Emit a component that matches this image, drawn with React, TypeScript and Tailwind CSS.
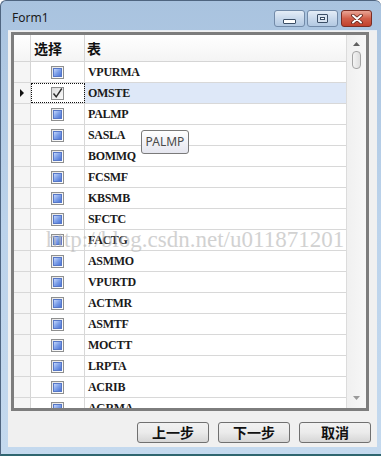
import React from "react";

const rows = [
  "VPURMA", "OMSTE", "PALMP", "SASLA", "BOMMQ", "FCSMF", "KBSMB", "SFCTC", "FACTG",
  "ASMMO", "VPURTD", "ACTMR", "ASMTF", "MOCTT", "LRPTA", "ACRIB", "AGRMA",
];

function BlueBox() {
  return (
    <div className="w-[13px] h-[13px] border border-[#8e8f8f] bg-gradient-to-br from-[#e6e6e6] to-[#ffffff] flex items-center justify-center">
      <div className="w-[9px] h-[9px] border border-[#5677c7] bg-gradient-to-br from-[#c3d5fb] via-[#7d9fe8] to-[#4c74d6]" />
    </div>
  );
}

function CheckedBox() {
  return (
    <div className="w-[13px] h-[13px] border border-[#8e8f8f] bg-gradient-to-br from-[#dcdcdc] to-[#fafafa] flex items-center justify-center">
      <svg width="11" height="11" viewBox="0 0 11 11">
        <path d="M1.5 5.5 L4.2 8.8 L9.8 0.5" fill="none" stroke="#2a2a2a" strokeWidth="1.4" />
      </svg>
    </div>
  );
}

function CapBtn({ kind }: { kind: "min" | "max" | "close" }) {
  if (kind === "close") {
    return (
      <div className="w-[31px] h-[17px] rounded-[3px] border border-[#7a2d23] bg-gradient-to-b from-[#e9a596] via-[#d15f4a] to-[#c1402b] flex items-center justify-center">
        <svg width="14" height="10" viewBox="0 0 14 10">
          <path d="M3 1.5 L11 8.5 M11 1.5 L3 8.5" stroke="#5a2018" strokeWidth="3.6" strokeLinecap="round" />
          <path d="M3 1.5 L11 8.5 M11 1.5 L3 8.5" stroke="#ffffff" strokeWidth="2" strokeLinecap="round" />
        </svg>
      </div>
    );
  }
  return (
    <div className="w-[31px] h-[17px] rounded-[3px] border border-[#728aa8] bg-gradient-to-b from-[#e4edf7] via-[#c9d9ec] to-[#b3c9e2] flex items-center justify-center">
      {kind === "min" ? (
        <div className="w-[13px] h-[5px] mt-[5px] border border-[#3b4e66] bg-white rounded-[1px]" />
      ) : (
        <div className="w-[11px] h-[9px] border border-[#3b4e66] bg-[#d9e4f1] flex items-center justify-center rounded-[1px]">
          <div className="w-[5px] h-[3px] border border-[#3b4e66] bg-white" />
        </div>
      )}
    </div>
  );
}

export default function App() {
  return (
    <div className="w-[381px] h-[456px] bg-white overflow-hidden">
      <div className="w-[381px] h-[456px] flex flex-col rounded-t-[6px] border-l border-t border-[#4f6580] border-b-2 border-b-[#2f6670] bg-gradient-to-b from-[#a9c3df] via-[#bcd3eb] to-[#c4d9ee]">
        {/* title bar */}
        <div className="h-[29px] shrink-0 flex items-start relative">
          <span className="ml-[11px] mt-[10px] text-[12px] leading-[14px] text-[#1a1a1a] [font-family:'Noto_Sans','Liberation_Sans',sans-serif]">
            Form1
          </span>
          <div className="ml-auto mr-[9px] mt-[9px] flex gap-[2px]">
            <CapBtn kind="min" />
            <CapBtn kind="max" />
            <div className="ml-[1px]">
              <CapBtn kind="close" />
            </div>
          </div>
        </div>
        {/* client */}
        <div className="ml-[7px] mr-[4px] h-[417px] shrink-0 bg-[#f0f0f0] flex flex-col border-t border-[#e6edf5]">
          <div className="ml-[3px] mt-[1px] w-[358px] h-[379px] shrink-0 border-[3px] border-[#7d7d7d] bg-white flex relative overflow-hidden">
            <div className="flex flex-col w-[332px]">
              {/* header */}
              <div className="flex h-[27px] shrink-0 border-b border-[#d5d5d5] bg-gradient-to-b from-[#ffffff] to-[#f4f4f4]">
                <div className="w-[17px] border-r border-[#d5d5d5]" />
                <div className="w-[54px] border-r border-[#d5d5d5] flex items-center pl-[3px] text-[14px] font-bold text-[#111] [font-family:'Noto_Sans_CJK_SC',sans-serif]">
                  选择
                </div>
                <div className="flex-1 flex items-center pl-[2px] text-[14px] font-bold text-[#111] [font-family:'Noto_Sans_CJK_SC',sans-serif]">
                  表
                </div>
              </div>
              {rows.map((r, i) => {
                const sel = i === 1;
                return (
                  <div key={r} className="flex h-[21px] shrink-0 border-b border-[#d8d8d8]">
                    <div className="w-[17px] shrink-0 border-r border-[#d5d5d5] bg-[#f5f5f5] flex items-center justify-center">
                      {sel && (
                        <svg width="5" height="8" viewBox="0 0 5 8">
                          <path d="M0 0 L4 4 L0 8 Z" fill="#111" />
                        </svg>
                      )}
                    </div>
                    <div
                      className={
                        "w-[54px] shrink-0 border-r border-[#d8d8d8] flex items-center justify-center " +
                        (sel ? "outline-1 outline-dotted outline-[#111] -outline-offset-1" : "")
                      }
                    >
                      {sel ? <CheckedBox /> : <BlueBox />}
                    </div>
                    <div
                      className={
                        "flex-1 flex items-center pl-[3px] text-[12px] font-bold tracking-[-0.3px] text-[#1a1a1a] [font-family:'Liberation_Serif',serif] " +
                        (sel ? "bg-[#dee8f8]" : "")
                      }
                    >
                      {r}
                    </div>
                  </div>
                );
              })}
            </div>
            {/* scrollbar */}
            <div className="w-[20px] border-l border-[#dcdcdc] bg-gradient-to-r from-[#f0f0f0] to-[#f7f7f7] flex flex-col items-center">
              <svg className="mt-[7px]" width="7" height="4" viewBox="0 0 7 4">
                <path d="M0 4 L3.5 0 L7 4 Z" fill="#606060" />
              </svg>
              <div className="mt-[5px] w-[9px] h-[18px] rounded-[4px] border border-[#a4a4a4] bg-gradient-to-r from-[#f4f4f4] to-[#dedede]" />
              <div className="flex-1" />
              <svg className="mb-[8px]" width="7" height="4" viewBox="0 0 7 4">
                <path d="M0 0 L3.5 4 L7 0 Z" fill="#9a9a9a" />
              </svg>
            </div>
            {/* tooltip */}
            <div className="absolute left-[127px] top-[95px] w-[48px] h-[24px] rounded-[3px] border border-[#7a7a7a] bg-gradient-to-b from-[#ffffff] to-[#e5e6ef] flex items-center justify-center text-[12px] text-[#4a4a4a] [font-family:'Noto_Sans','Liberation_Sans',sans-serif]">
              PALMP
            </div>
            {/* watermark */}
            <div className="absolute left-[32px] top-[191px] text-[23px] leading-[28px] text-[#b4b4b4] opacity-60 whitespace-nowrap [font-family:'Liberation_Serif',serif] pointer-events-none">
              http://blog.csdn.net/u011871201
            </div>
          </div>
          {/* buttons */}
          <div className="mt-[11px] flex justify-end gap-[9px] pr-[6px]">
            {["上一步", "下一步", "取消"].map((t) => (
              <div
                key={t}
                className="w-[72px] h-[21px] rounded-[3px] border border-[#707070] bg-gradient-to-b from-[#f2f2f2] via-[#ebebeb] to-[#d6d6d6] flex items-center justify-center text-[14px] font-bold text-[#111] [font-family:'Noto_Sans_CJK_SC',sans-serif]"
              >
                {t}
              </div>
            ))}
          </div>
        </div>
      </div>
    </div>
  );
}
